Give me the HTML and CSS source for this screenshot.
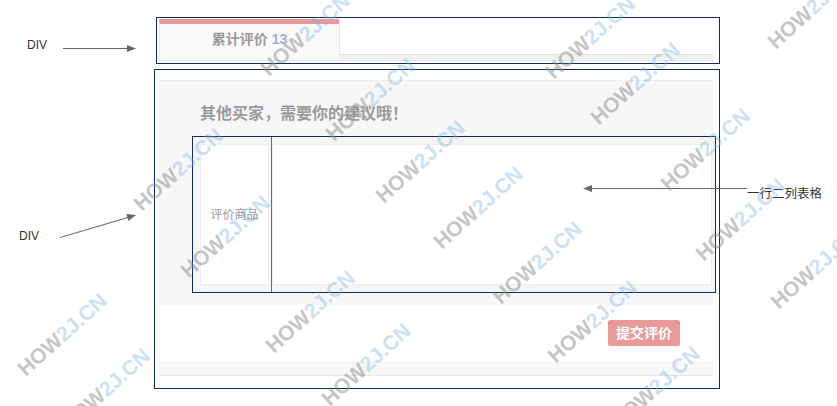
FILE: index.html
```html
<!DOCTYPE html>
<html lang="zh-CN">
<head>
<meta charset="utf-8">
<title>评价</title>
<link rel="stylesheet" href="styles.css">
</head>
<body>
<div class="page">
  <div class="box box-top">
    <div class="tabbar">
      <div class="tab">累计评价 <span class="count">13</span></div>
      <div class="tab-rest"></div>
    </div>
  </div>
  <div class="box box-main">
    <div class="panel">
      <div class="panel-body">
        <div class="panel-title">其他买家，需要你的建议哦！</div>
        <div class="review-table">
          <div class="col col-label"><div class="cell cell-label">评价商品</div></div>
          <div class="col col-input"><div class="cell cell-input"></div></div>
        </div>
      </div>
      <div class="panel-actions">
        <button class="submit">提交评价</button>
      </div>
      <div class="panel-foot"></div>
    </div>
  </div>

  <span class="note note-div1">DIV</span>
  <span class="note note-div2">DIV</span>
  <span class="note note-table">一行二列表格</span>
  <svg class="arrows" width="837" height="406" viewBox="0 0 837 406">
    <line x1="63" y1="48.5" x2="128" y2="48.5"/>
    <polygon points="136,48.5 127,45 127,52"/>
    <line x1="60" y1="237.5" x2="128" y2="217.5"/>
    <polygon points="136,215 128.4,220.9 126.4,214.1"/>
    <line x1="747" y1="188.5" x2="591" y2="188.5"/>
    <polygon points="583,188.5 592,185 592,192"/>
  </svg>

  <div class="watermarks">
    <span class="wm" style="left:757px;top:-2px">HOW<b>2J.CN</b></span>
    <span class="wm" style="left:250px;top:25px">HOW<b>2J.CN</b></span>
    <span class="wm" style="left:535px;top:28px">HOW<b>2J.CN</b></span>
    <span class="wm" style="left:580px;top:74px">HOW<b>2J.CN</b></span>
    <span class="wm" style="left:315px;top:90px">HOW<b>2J.CN</b></span>
    <span class="wm" style="left:650px;top:140px">HOW<b>2J.CN</b></span>
    <span class="wm" style="left:365px;top:152px">HOW<b>2J.CN</b></span>
    <span class="wm" style="left:123px;top:160px">HOW<b>2J.CN</b></span>
    <span class="wm" style="left:685px;top:210px">HOW<b>2J.CN</b></span>
    <span class="wm" style="left:423px;top:198px">HOW<b>2J.CN</b></span>
    <span class="wm" style="left:170px;top:227px">HOW<b>2J.CN</b></span>
    <span class="wm" style="left:482px;top:253px">HOW<b>2J.CN</b></span>
    <span class="wm" style="left:760px;top:258px">HOW<b>2J.CN</b></span>
    <span class="wm" style="left:537px;top:312px">HOW<b>2J.CN</b></span>
    <span class="wm" style="left:255px;top:302px">HOW<b>2J.CN</b></span>
    <span class="wm" style="left:7px;top:325px">HOW<b>2J.CN</b></span>
    <span class="wm" style="left:311px;top:355px">HOW<b>2J.CN</b></span>
    <span class="wm" style="left:600px;top:378px">HOW<b>2J.CN</b></span>
    <span class="wm" style="left:50px;top:380px">HOW<b>2J.CN</b></span>
  </div>
</div>
</body>
</html>
```
FILE: styles.css
```css
* { box-sizing: border-box; }
html, body { margin: 0; padding: 0; background: #ffffff; }
body { font-family: "Liberation Sans", "Noto Sans CJK SC", sans-serif; }

.page {
  position: relative;
  width: 837px;
  height: 406px;
  overflow: hidden;
  padding: 17px 0 0 154px;
}

.box { border: 1px solid #0c2c64; }

.box-top {
  width: 564px;
  height: 47px;
  margin-left: 2px;
  padding: 1px 0 0 2px;
}
.tabbar {
  display: flex;
  width: 554px;
  height: 42px;
  background: #f2f2f2;
  border-bottom: 1px solid #e6e6e6;
}
.tab {
  width: 180px;
  height: 41px;
  background: #fafaf8;
  border-top: 5px solid #e89a9a;
  border-left: 1px solid #ececec;
  padding-top: 5px;
  line-height: 20px;
  text-align: center;
  font-size: 14px;
  font-weight: bold;
  color: #999999;
}
.tab .count { color: #9cb1d9; }
.tab-rest {
  flex: 1;
  height: 36px;
  background: #ffffff;
  border-left: 1px solid #e6e6e6;
  border-bottom: 1px solid #e3e3e3;
}

.box-main {
  width: 566px;
  height: 320px;
  margin-top: 5px;
  padding: 10px 0 0 4px;
}
.panel {
  width: 554px;
  border-bottom: 1px solid #e6e6e6;
}
.panel-body {
  height: 225px;
  background: #f7f7f7;
  border-top: 1px solid #eeeeee;
  padding-top: 19px;
}
.panel-title {
  padding-left: 41px;
  font-family: "Noto Sans CJK TC", "Noto Sans CJK SC", sans-serif;
  font-size: 16px;
  line-height: 24px;
  font-weight: bold;
  color: #9b9b9b;
}
.review-table {
  display: flex;
  width: 524px;
  height: 157px;
  margin: 12px 0 0 33px;
  border: 1px solid #0c2c64;
  background: #f5f5f5;
}
.col { height: 100%; }
.col-label {
  width: 79px;
  padding: 7px 2px 7px 7px;
  border-right: 1px solid #6a6a6a;
}
.col-input {
  flex: 1;
  padding: 7px 3px 7px 0;
}
.cell {
  height: 100%;
  background: #ffffff;
  border: 1px solid #eeeeee;
}
.cell-label {
  display: flex;
  align-items: center;
  justify-content: center;
  font-size: 12px;
  color: #999999;
  padding-bottom: 2px;
}

.panel-actions {
  height: 56px;
  background: #ffffff;
  display: flex;
  justify-content: flex-end;
  align-items: center;
  padding-right: 33px;
}
.submit {
  width: 72px;
  height: 26px;
  border: none;
  border-radius: 2px;
  background: #e89a9a;
  color: #ffffff;
  font-family: "Liberation Sans", "Noto Sans CJK SC", sans-serif;
  font-size: 14px;
  font-weight: bold;
  padding: 0;
  line-height: 26px;
}
.panel-foot {
  height: 14px;
  background: #f7f7f7;
}

.note {
  position: absolute;
  font-size: 12px;
  line-height: 14px;
  color: #333333;
}
.note-div1 { left: 27px; top: 38px; }
.note-div2 { left: 19px; top: 229px; }
.note-table { left: 747px; top: 185px; font-size: 12.5px; line-height: 16px; font-family: "Noto Sans CJK SC", sans-serif; }

.arrows {
  position: absolute;
  left: 0;
  top: 0;
  pointer-events: none;
}
.arrows line { stroke: #666666; stroke-width: 1; }
.arrows polygon { fill: #666666; }

.watermarks {
  position: absolute;
  left: 0;
  top: 0;
  width: 837px;
  height: 406px;
  pointer-events: none;
}
.wm {
  position: absolute;
  width: 110px;
  height: 20px;
  line-height: 20px;
  text-align: center;
  white-space: nowrap;
  font-family: "Liberation Sans", sans-serif;
  font-size: 21px;
  font-weight: bold;
  color: rgba(140, 140, 140, 0.5);
  transform: rotate(-42deg);
}
.wm b { color: rgba(120, 175, 225, 0.4); }
```
